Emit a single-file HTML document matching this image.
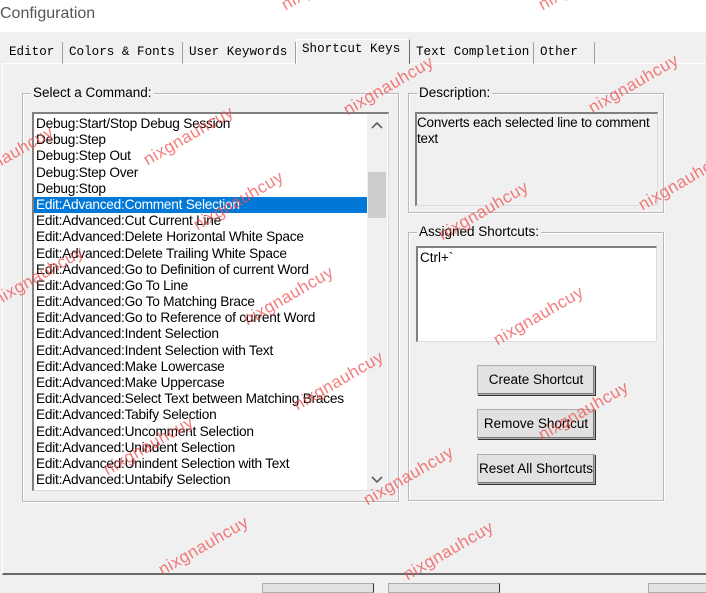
<!DOCTYPE html>
<html><head><meta charset="utf-8"><style>
*{margin:0;padding:0;box-sizing:border-box}
body{width:706px;height:589px;background:#f0f0f0;position:relative;overflow:hidden;font-family:"Liberation Sans",Arial,sans-serif;font-size:13.5px;color:#000}
.a{position:absolute}
.title{left:0;top:0;width:706px;height:32px;background:#fff}
.title span{position:absolute;left:0;top:5px;font-size:16px;color:#555}
.tab{position:absolute;top:42px;height:22px;font-family:"Liberation Mono",monospace;font-size:12.6px;border-right:1px solid #a0a0a0;padding:3px 0 0 5px;white-space:nowrap;overflow:hidden}
.panel{left:2px;top:63px;width:710px;height:512px;border-top:1px solid #fff;border-left:1px solid #fff;border-bottom:2px solid #696969}
.grp{position:absolute;border:1px solid #b8b8b8;box-shadow:inset 1px 1px 0 #fff,1px 1px 0 #fff}
.grp .lbl{position:absolute;top:-9px;left:8px;background:#f0f0f0;padding:0 2px;font-size:13.5px}
.inset{position:absolute;border-top:2px solid #808080;border-left:2px solid #808080;border-right:1px solid #dcdcdc;border-bottom:1px solid #dcdcdc}
.row{height:16.2px;line-height:16px;padding-left:2px;white-space:nowrap;font-size:13.7px;letter-spacing:-0.25px}
.sel{background:#0078d7;color:#fff}
.btn{position:absolute;left:477px;width:118px;height:30px;background:#e1e1e1;border:1px solid #adadad;box-shadow:inset -1px -1px 0 #7a7a7a,1px 1px 0 #333;text-align:center;line-height:27px;font-size:13.5px}
.wm{position:absolute;color:rgba(240,80,80,.75);font-size:17px;transform:rotate(-30deg);transform-origin:left bottom;white-space:nowrap;letter-spacing:.5px}
</style></head><body>
<div class="a title"><span>Configuration</span></div>
<div class="a panel"></div>
<div class="tab" style="left:4px;width:59px">Editor</div>
<div class="tab" style="left:64px;width:119px">Colors &amp; Fonts</div>
<div class="tab" style="left:184px;width:112px">User Keywords</div>
<div class="tab" style="left:296px;top:39px;height:25px;width:114px;background:#f0f0f0;border-left:1px solid #fff;border-top:1px solid #fff;border-right:1px solid #696969;padding-top:2px">Shortcut Keys</div>
<div class="tab" style="left:411px;width:123px">Text Completion</div>
<div class="tab" style="left:535px;width:60px;padding-left:5px">Other</div>

<div class="grp" style="left:22px;top:93px;width:377px;height:409px"><span class="lbl">Select a Command:</span></div>
<div class="inset" style="left:32px;top:112px;width:357px;height:379px;background:#fff;overflow:hidden">
<div style="padding-top:2px;width:334px">
<div class="row">Debug:Start/Stop Debug Session</div>
<div class="row">Debug:Step</div>
<div class="row">Debug:Step Out</div>
<div class="row">Debug:Step Over</div>
<div class="row">Debug:Stop</div>
<div class="row sel">Edit:Advanced:Comment Selection</div>
<div class="row">Edit:Advanced:Cut Current Line</div>
<div class="row">Edit:Advanced:Delete Horizontal White Space</div>
<div class="row">Edit:Advanced:Delete Trailing White Space</div>
<div class="row">Edit:Advanced:Go to Definition of current Word</div>
<div class="row">Edit:Advanced:Go To Line</div>
<div class="row">Edit:Advanced:Go To Matching Brace</div>
<div class="row">Edit:Advanced:Go to Reference of current Word</div>
<div class="row">Edit:Advanced:Indent Selection</div>
<div class="row">Edit:Advanced:Indent Selection with Text</div>
<div class="row">Edit:Advanced:Make Lowercase</div>
<div class="row">Edit:Advanced:Make Uppercase</div>
<div class="row">Edit:Advanced:Select Text between Matching Braces</div>
<div class="row">Edit:Advanced:Tabify Selection</div>
<div class="row">Edit:Advanced:Uncomment Selection</div>
<div class="row">Edit:Advanced:Unindent Selection</div>
<div class="row">Edit:Advanced:Unindent Selection with Text</div>
<div class="row">Edit:Advanced:Untabify Selection</div>
</div>
<div class="a" style="left:333px;top:0;width:20px;height:376px;background:#f0f0f0"></div>
<div class="a" style="left:334px;top:58px;width:18px;height:46px;background:#cdcdcd"></div>
<svg class="a" style="left:337px;top:8px" width="12" height="8"><path d="M1 6 L6 1 L11 6" stroke="#606060" stroke-width="1.6" fill="none"/></svg>
<svg class="a" style="left:337px;top:361px" width="12" height="8"><path d="M1 2 L6 7 L11 2" stroke="#606060" stroke-width="1.6" fill="none"/></svg>
</div>

<div class="grp" style="left:408px;top:93px;width:256px;height:120px"><span class="lbl">Description:</span></div>
<div class="inset" style="left:415px;top:112px;width:243px;height:94px;background:#f0f0f0;padding:1px 0 0 0;line-height:16px;font-size:13.5px;letter-spacing:-0.2px">Converts each selected line to comment text</div>

<div class="grp" style="left:408px;top:232px;width:256px;height:269px"><span class="lbl">Assigned Shortcuts:</span></div>
<div class="inset" style="left:416px;top:246px;width:241px;height:96px;background:#fff;padding:2px 0 0 2px">Ctrl+`</div>

<div class="btn" style="top:365px">Create Shortcut</div>
<div class="btn" style="top:409px">Remove Shortcut</div>
<div class="btn" style="top:454px">Reset All Shortcuts</div>

<div class="a" style="left:262px;top:583px;width:112px;height:10px;border:1px solid #adadad;border-right:1px solid #333;background:#e1e1e1"></div>
<div class="a" style="left:388px;top:583px;width:112px;height:10px;border:1px solid #adadad;border-right:1px solid #333;background:#e1e1e1"></div>
<div class="a" style="left:648px;top:583px;width:70px;height:10px;border:1px solid #adadad;background:#e1e1e1"></div>

<div class="wm" style="left:288px;top:-5px">nixgnauhcuy</div>
<div class="wm" style="left:545px;top:-5px">nixgnauhcuy</div>
<div class="wm" style="left:350px;top:100px">nixgnauhcuy</div>
<div class="wm" style="left:595px;top:98px">nixgnauhcuy</div>
<div class="wm" style="left:150px;top:150px">nixgnauhcuy</div>
<div class="wm" style="left:-30px;top:170px">nixgnauhcuy</div>
<div class="wm" style="left:200px;top:215px">nixgnauhcuy</div>
<div class="wm" style="left:445px;top:225px">nixgnauhcuy</div>
<div class="wm" style="left:645px;top:195px">nixgnauhcuy</div>
<div class="wm" style="left:0px;top:290px">nixgnauhcuy</div>
<div class="wm" style="left:250px;top:310px">nixgnauhcuy</div>
<div class="wm" style="left:500px;top:330px">nixgnauhcuy</div>
<div class="wm" style="left:300px;top:395px">nixgnauhcuy</div>
<div class="wm" style="left:110px;top:460px">nixgnauhcuy</div>
<div class="wm" style="left:545px;top:425px">nixgnauhcuy</div>
<div class="wm" style="left:370px;top:490px">nixgnauhcuy</div>
<div class="wm" style="left:165px;top:560px">nixgnauhcuy</div>
<div class="wm" style="left:410px;top:565px">nixgnauhcuy</div>
</body></html>
